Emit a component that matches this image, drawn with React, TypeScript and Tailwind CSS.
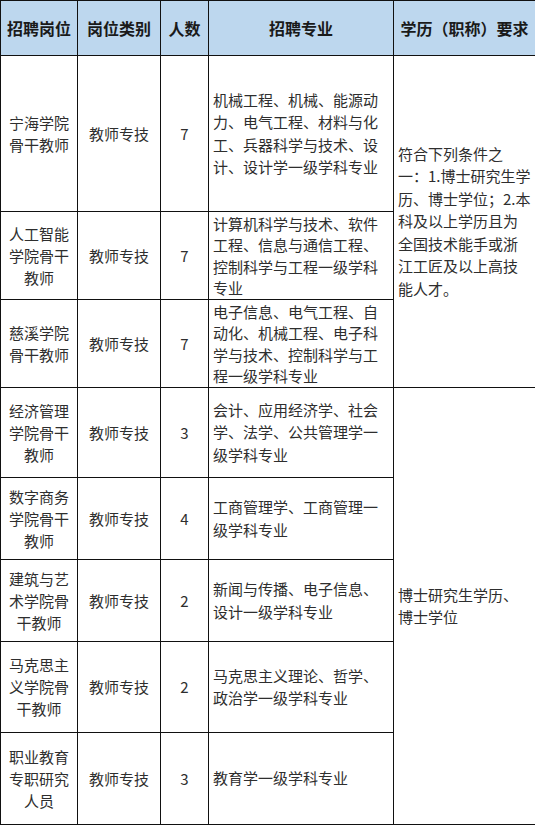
import React from "react";

type Row = {
  pos: string[];
  type: string;
  num: string;
  major: string[];
  h: string;
  tight?: boolean;
};

const rows: Row[] = [
  { pos: ["宁海学院", "骨干教师"], type: "教师专技", num: "7", major: ["机械工程、机械、能源动", "力、电气工程、材料与化", "工、兵器科学与技术、设", "计、设计学一级学科专业"], h: "h-[156px]" },
  { pos: ["人工智能", "学院骨干", "教师"], type: "教师专技", num: "7", major: ["计算机科学与技术、软件", "工程、信息与通信工程、", "控制科学与工程一级学科", "专业"], h: "h-[88px]", tight: true },
  { pos: ["慈溪学院", "骨干教师"], type: "教师专技", num: "7", major: ["电子信息、电气工程、自", "动化、机械工程、电子科", "学与技术、控制科学与工", "程一级学科专业"], h: "h-[88px]", tight: true },
  { pos: ["经济管理", "学院骨干", "教师"], type: "教师专技", num: "3", major: ["会计、应用经济学、社会", "学、法学、公共管理学一", "级学科专业"], h: "h-[90px]" },
  { pos: ["数字商务", "学院骨干", "教师"], type: "教师专技", num: "4", major: ["工商管理学、工商管理一", "级学科专业"], h: "h-[82px]" },
  { pos: ["建筑与艺", "术学院骨", "干教师"], type: "教师专技", num: "2", major: ["新闻与传播、电子信息、", "设计一级学科专业"], h: "h-[82px]" },
  { pos: ["马克思主", "义学院骨", "干教师"], type: "教师专技", num: "2", major: ["马克思主义理论、哲学、", "政治学一级学科专业"], h: "h-[91px]" },
  { pos: ["职业教育", "专职研究", "人员"], type: "教师专技", num: "3", major: ["教育学一级学科专业"], h: "h-[92px]" },
];

const req1 = ["符合下列条件之", "一：1.博士研究生学", "历、博士学位；2.本", "科及以上学历且为", "全国技术能手或浙", "江工匠及以上高技", "能人才。"];
const req2 = ["博士研究生学历、", "博士学位"];

const Lines = ({ lines }: { lines: string[] }) => (
  <>
    {lines.map((l, i) => (
      <div key={i} className="whitespace-nowrap">
        {l}
      </div>
    ))}
  </>
);

export default function App() {
  const td = "border border-[#111] align-middle p-0";
  return (
    <div
      className="w-[535px] h-[825px] bg-white text-[#2e2e2e] text-[15px] leading-[22px]"
      style={{ fontFamily: '"Noto Sans CJK SC", "Noto Sans", sans-serif' }}
    >
      <table className="table-fixed border-collapse w-[535px]">
        <colgroup>
          <col className="w-[77px]" />
          <col className="w-[83px]" />
          <col className="w-[48px]" />
          <col className="w-[185px]" />
          <col className="w-[142px]" />
        </colgroup>
        <thead>
          <tr className="h-[55px] bg-[#bdd7ee] text-[16px] font-bold text-[#1a1a1a]">
            <th className={`${td} text-center`}>招聘岗位</th>
            <th className={`${td} text-center`}>岗位类别</th>
            <th className={`${td} text-center`}>人数</th>
            <th className={`${td} text-center`}>招聘专业</th>
            <th className={`${td} text-center`}>学历（职称）要求</th>
          </tr>
        </thead>
        <tbody>
          {rows.map((r, i) => (
            <tr key={i} className={r.h}>
              <td className={`${td} text-center`}>
                <Lines lines={r.pos} />
              </td>
              <td className={`${td} text-center`}>{r.type}</td>
              <td className={`${td} text-center`}>{r.num}</td>
              <td className={`${td} text-left pl-[4px] ${r.tight ? "leading-[21.5px]" : "leading-[22.5px]"}`}>
                <Lines lines={r.major} />
              </td>
              {i === 0 && (
                <td rowSpan={3} className={`${td} text-left pl-[4px] leading-[22.5px]`}>
                  <Lines lines={req1} />
                </td>
              )}
              {i === 3 && (
                <td rowSpan={5} className={`${td} text-left pl-[4px] leading-[22.5px]`}>
                  <Lines lines={req2} />
                </td>
              )}
            </tr>
          ))}
        </tbody>
      </table>
    </div>
  );
}
